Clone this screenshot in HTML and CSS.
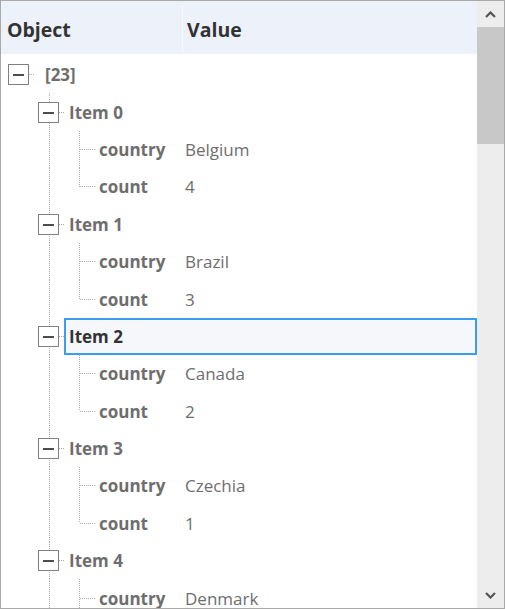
FILE: index.html
```html
<!DOCTYPE html>
<html lang="en">

<head>
    <meta charset="UTF-8">
    <meta name="viewport" content="width=device-width, initial-scale=1.0">
    <title>Object Tree</title>
    <link rel="stylesheet" href="styles.css">
</head>

<body>
    <div class="grid">
        <div class="main">
            <div class="head">
                <div class="head-obj">Object</div>
                <div class="head-val">Value</div>
            </div>
            <div class="tree">
                <!-- root -->
                <div class="row root">
                    <span class="toggle"></span><span class="stub"></span>
                    <span class="label">[23]</span>
                </div>

                <div class="row item">
                    <span class="toggle"></span><span class="stub"></span>
                    <span class="label">Item 0</span>
                </div>
                <div class="row leaf">
                    <span class="stub"></span><span class="name">country</span><span class="value">Belgium</span>
                </div>
                <div class="row leaf last">
                    <span class="stub"></span><span class="name">count</span><span class="value">4</span>
                </div>

                <div class="row item">
                    <span class="toggle"></span><span class="stub"></span>
                    <span class="label">Item 1</span>
                </div>
                <div class="row leaf">
                    <span class="stub"></span><span class="name">country</span><span class="value">Brazil</span>
                </div>
                <div class="row leaf last">
                    <span class="stub"></span><span class="name">count</span><span class="value">3</span>
                </div>

                <div class="row item selected">
                    <span class="toggle"></span><span class="stub"></span>
                    <span class="label">Item 2</span>
                </div>
                <div class="row leaf">
                    <span class="stub"></span><span class="name">country</span><span class="value">Canada</span>
                </div>
                <div class="row leaf last">
                    <span class="stub"></span><span class="name">count</span><span class="value">2</span>
                </div>

                <div class="row item">
                    <span class="toggle"></span><span class="stub"></span>
                    <span class="label">Item 3</span>
                </div>
                <div class="row leaf">
                    <span class="stub"></span><span class="name">country</span><span class="value">Czechia</span>
                </div>
                <div class="row leaf last">
                    <span class="stub"></span><span class="name">count</span><span class="value">1</span>
                </div>

                <div class="row item">
                    <span class="toggle"></span><span class="stub"></span>
                    <span class="label">Item 4</span>
                </div>
                <div class="row leaf">
                    <span class="stub"></span><span class="name">country</span><span class="value">Denmark</span>
                </div>
            </div>
        </div>

        <!-- scrollbar -->
        <div class="scroll">
            <div class="arrow">
                <svg width="11" height="7" viewBox="0 0 11 7"><polyline points="1,6 5.5,1.5 10,6" fill="none" stroke="#555" stroke-width="2.2"/></svg>
            </div>
            <div class="thumb"></div>
            <div class="track"></div>
            <div class="arrow">
                <svg width="11" height="7" viewBox="0 0 11 7"><polyline points="1,1 5.5,5.5 10,1" fill="none" stroke="#555" stroke-width="2.2"/></svg>
            </div>
        </div>
    </div>
</body>

</html>
```

FILE: styles.css
```css
body {
    margin: 0;
    font-family: "Open Sans", "Noto Sans", sans-serif;
}

.grid {
    width: 505px;
    height: 609px;
    box-sizing: border-box;
    border: 1px solid #a9a9a9;
    display: flex;
    overflow: hidden;
    background-color: #fff;
}

.main {
    width: 476px;
    display: flex;
    flex-direction: column;
}

/* Header */
.head {
    height: 53px;
    box-sizing: border-box;
    padding-top: 4px;
    flex: none;
    display: flex;
    background-color: #edf2fa;
    font-size: 19.5px;
    font-weight: 700;
    color: #333;
}

.head-obj {
    width: 182px;
    box-sizing: border-box;
    padding-left: 6px;
    border-right: 1px solid #f6f8fc;
    display: flex;
    align-items: center;
}

.head-val {
    padding-left: 4px;
    display: flex;
    align-items: center;
}

/* Tree */
.tree {
    flex: 1;
    overflow: hidden;
    padding-top: 2px;
}

.row {
    height: 37.4px;
    display: flex;
    align-items: center;
    position: relative;
    font-size: 17px;
    font-weight: 700;
    color: #6e6e6e;
}

/* dotted guide lines */
.row.item::before,
.row.leaf::before,
.row.leaf::after {
    content: "";
    position: absolute;
    top: 0;
    bottom: 0;
    width: 1px;
    background: repeating-linear-gradient(to bottom, #aaa 0 1px, transparent 1px 2px);
}

.row.item::before,
.row.leaf::before {
    left: 48px;
}

.row.leaf::after {
    left: 78px;
}

.row.leaf.last::after {
    bottom: 50%;
}

.stub {
    height: 1px;
    flex: none;
    background: repeating-linear-gradient(to right, #aaa 0 1px, transparent 1px 2px);
}

.toggle {
    width: 21px;
    height: 21px;
    flex: none;
    box-sizing: border-box;
    border: 1px solid #808080;
    background-color: #fff;
    position: relative;
    z-index: 1;
}

.toggle::after {
    content: "";
    position: absolute;
    left: 4px;
    top: 9px;
    width: 11px;
    height: 2px;
    background-color: #4d4d4d;
}

.root .toggle {
    margin-left: 7px;
}

.root .stub {
    width: 6px;
    margin-right: 10px;
}

.item .toggle {
    margin-left: 37px;
}

.item .stub {
    width: 5px;
}

.item .label {
    flex: 1;
    align-self: stretch;
    display: flex;
    align-items: center;
    padding-left: 3px;
    border: 2px solid transparent;
}

.item.selected .label {
    border-color: #3a9ded;
    background-color: #f5f7fb;
    color: #333;
}

.leaf .stub {
    width: 16px;
    margin-left: 79px;
    margin-right: 3px;
}

.leaf .name {
    width: 86px;
    flex: none;
}

.leaf .value {
    font-weight: 400;
}

/* Scrollbar */
.scroll {
    width: 27px;
    display: flex;
    flex-direction: column;
    background-color: #ededed;
}

.arrow {
    height: 26px;
    flex: none;
    display: flex;
    align-items: center;
    justify-content: center;
}

.thumb {
    height: 117px;
    flex: none;
    background-color: #c8c8c8;
}

.track {
    flex: 1;
}
```
